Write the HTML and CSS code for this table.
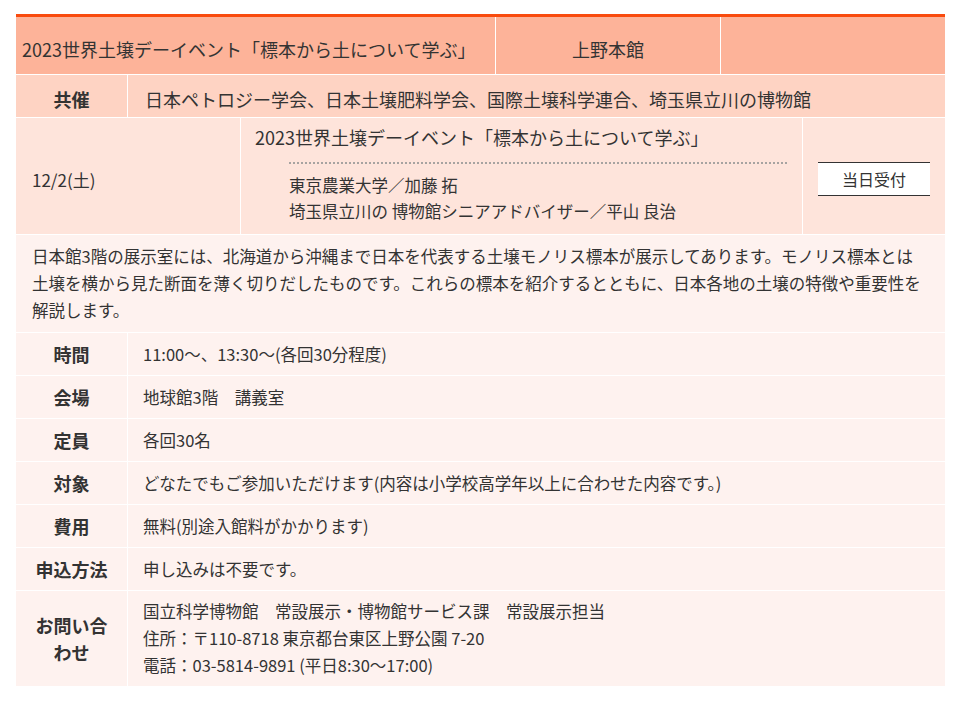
FILE: index.html
```html
<!DOCTYPE html>
<html lang="ja">
<head>
    <meta charset="utf-8">
    <title>2023世界土壌デーイベント</title>
    <link rel="stylesheet" href="styles.css">
</head>
<body>
    <div class="event">
        <div class="row head">
            <div class="cell head-title">2023世界土壌デーイベント「標本から土について学ぶ」</div>
            <div class="cell head-place">上野本館</div>
            <div class="cell head-blank"></div>
        </div>
        <div class="row cohost">
            <div class="cell label">共催</div>
            <div class="cell value">日本ペトロジー学会、日本土壌肥料学会、国際土壌科学連合、埼玉県立川の博物館</div>
        </div>
        <div class="row session">
            <div class="cell date">12/2(土)</div>
            <div class="cell program">
                <p class="program-title">2023世界土壌デーイベント「標本から土について学ぶ」</p>
                <ul class="speakers">
                    <li>東京農業大学／加藤 拓</li>
                    <li>埼玉県立川の 博物館シニアアドバイザー／平山 良治</li>
                </ul>
            </div>
            <div class="cell entry"><span class="badge">当日受付</span></div>
        </div>
        <div class="row desc">
            <p>日本館3階の展示室には、北海道から沖縄まで日本を代表する土壌モノリス標本が展示してあります。モノリス標本とは土壌を横から見た断面を薄く切りだしたものです。これらの標本を紹介するとともに、日本各地の土壌の特徴や重要性を解説します。</p>
        </div>
        <div class="row detail">
            <div class="cell label">時間</div>
            <div class="cell value">11:00～、13:30～(各回30分程度)</div>
        </div>
        <div class="row detail">
            <div class="cell label">会場</div>
            <div class="cell value">地球館3階　講義室</div>
        </div>
        <div class="row detail">
            <div class="cell label">定員</div>
            <div class="cell value">各回30名</div>
        </div>
        <div class="row detail">
            <div class="cell label">対象</div>
            <div class="cell value">どなたでもご参加いただけます(内容は小学校高学年以上に合わせた内容です。)</div>
        </div>
        <div class="row detail">
            <div class="cell label">費用</div>
            <div class="cell value">無料(別途入館料がかかります)</div>
        </div>
        <div class="row detail">
            <div class="cell label">申込方法</div>
            <div class="cell value">申し込みは不要です。</div>
        </div>
        <div class="row detail contact">
            <div class="cell label">お問い合わせ</div>
            <div class="cell value">
                <p>国立科学博物館　常設展示・博物館サービス課　常設展示担当<br>
                住所：〒110-8718 東京都台東区上野公園 7-20<br>
                電話：03-5814-9891 (平日8:30～17:00)</p>
            </div>
        </div>
    </div>
</body>
</html>
```

FILE: styles.css
```css
body {
    margin: 0;
    background: #fff;
    color: #333;
    font-family: "Noto Sans CJK JP", sans-serif;
}
p { margin: 0; }

.event {
    width: 929px;
    margin: 14px 0 0 16px;
    border-top: 3px solid #f94b0e;
}
.row {
    display: flex;
    box-sizing: border-box;
    border-bottom: 1px solid #fff;
}
.cell {
    display: flex;
    align-items: center;
    box-sizing: border-box;
}
.cell + .cell { border-left: 1px solid #fff; }

/* header */
.head {
    height: 58px;
    background: #fdb399;
    font-size: 18px;
}
.head .cell { padding-top: 6px; }
.head-title { width: 479px; padding-left: 6px; }
.head-place { width: 225px; justify-content: center; }
.head-blank { width: 225px; }

/* co-host */
.cohost {
    height: 43px;
    background: #fed3c3;
    font-size: 18px;
}
.cohost .cell { padding-top: 6px; }

.label {
    width: 111px;
    flex-shrink: 0;
    justify-content: center;
    text-align: center;
    font-weight: bold;
    font-size: 18px;
}
.value { flex: 1; }
.cohost .value { padding-left: 17px; }

/* session */
.session {
    height: 117px;
    background: #fee4db;
}
.date {
    width: 224px;
    padding: 6px 0 0 16px;
    font-size: 17px;
}
.program {
    width: 562px;
    flex-direction: column;
    align-items: stretch;
    justify-content: center;
    padding: 6px 15px 10px 14px;
}
.program-title {
    font-size: 18px;
    line-height: 24px;
}
.speakers {
    list-style: none;
    margin: 13px 0 0 34px;
    padding: 8px 0 0;
    border-top: 2px dotted #a7a3a1;
    font-size: 16.5px;
    line-height: 26px;
}
.entry {
    width: 143px;
    justify-content: center;
    padding-top: 6px;
}
.badge {
    display: block;
    width: 112px;
    height: 34px;
    box-sizing: border-box;
    border-top: 1px solid #333;
    border-bottom: 1px solid #333;
    background: #fff;
    font-size: 16px;
    line-height: 32px;
    text-align: center;
}

/* description */
.desc {
    height: 98px;
    background: #fef2ef;
    padding: 8px 18px 0 16px;
    font-size: 16.5px;
    line-height: 27px;
}

/* details */
.detail {
    height: 43px;
    background: #fef2ef;
    font-size: 16.5px;
    line-height: 27px;
}
.detail .value { padding-left: 15px; }
.contact { height: 96px; }
.contact .label { padding: 0 12px; }
```
